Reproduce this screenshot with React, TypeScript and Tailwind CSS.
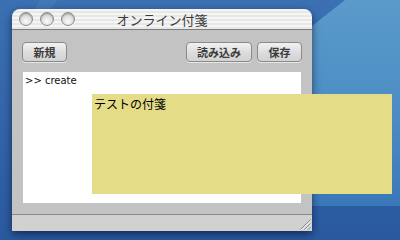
import React from 'react';

const jp = "font-['Lucida_Grande','Noto_Sans_CJK_JP',sans-serif]";

// Aqua desktop behind the window
const Wallpaper: React.FC = () => (
    <svg className="absolute inset-0" width="400" height="240" viewBox="0 0 400 240">
        <defs>
            <linearGradient id="base" x1="0" y1="0" x2="0" y2="1">
                <stop offset="0" stopColor="#3b71b3" />
                <stop offset="1" stopColor="#2a59a0" />
            </linearGradient>
            <linearGradient id="light" x1="0" y1="0" x2="0" y2="1">
                <stop offset="0" stopColor="#5a9bcb" />
                <stop offset="0.6" stopColor="#4a8bc3" />
                <stop offset="1" stopColor="#3a77b8" />
            </linearGradient>
        </defs>
        <rect width="400" height="240" fill="url(#base)" />
        <polygon points="345,0 400,0 400,206 312,206 312,26" fill="url(#light)" />
        <polygon points="40,0 58,0 30,30 22,30" fill="#4a82c0" opacity="0.5" />
    </svg>
);

const Light: React.FC = () => (
    <span className="block w-[14px] h-[14px] rounded-full border border-[#8e8e8e] bg-[radial-gradient(circle_at_50%_70%,#fbfbfb_0%,#e2e2e2_45%,#b9b9b9_100%)] shadow-[inset_0_1px_1px_rgba(0,0,0,0.25)]" />
);

const Button: React.FC<{ label: string; w: string }> = ({ label, w }) => (
    <button
        className={`${w} h-[20px] rounded-[4px] border border-[#8a8a8a] bg-[linear-gradient(to_bottom,#f2f2f2,#dcdcdc_55%,#d2d2d2)] shadow-[0_1px_0_rgba(255,255,255,0.6)] text-[11px] font-bold text-[#3c3c3c] leading-none ${jp}`}
    >
        {label}
    </button>
);

export default function App() {
    return (
        <div className="relative w-[400px] h-[240px] overflow-hidden pl-[12px] pt-[9px]">
            <Wallpaper />

            {/* Window */}
            <div className="relative w-[300px] h-[222px] flex flex-col rounded-t-[8px] shadow-[0_3px_9px_rgba(0,0,20,0.55)]">
                <div className="relative h-[21px] shrink-0 flex items-center pl-[7px] gap-[7px] rounded-t-[8px] border-b border-[#7d7d7d] bg-[repeating-linear-gradient(to_bottom,#f5f5f5_0px,#f5f5f5_2px,#e7e7e7_2px,#e7e7e7_4px)]">
                    <Light />
                    <Light />
                    <Light />
                    <span className={`absolute inset-x-0 top-[2px] text-center text-[13px] leading-[17px] text-[#3a3a3a] ${jp}`}>
                        オンライン付箋
                    </span>
                </div>

                <div className="flex-1 bg-[#c3c3c3] px-[10px] pt-[12px]">
                    <div className="flex gap-[5px]">
                        <Button label="新規" w="w-[45px]" />
                        <div className="flex-1" />
                        <Button label="読み込み" w="w-[66px]" />
                        <Button label="保存" w="w-[45px]" />
                    </div>
                    <div className="mx-[1px] mt-[10px] h-[131px] bg-white pl-[2px] pt-[2px]">
                        <p className="font-['DejaVu_Sans',sans-serif] text-[10px] leading-[13px] text-[#111]">&gt;&gt; create</p>
                    </div>
                </div>

                <div className="relative h-[17px] shrink-0 border-t border-[#8a8a8a] bg-[#d1d1d1]">
                    <svg className="absolute right-[1px] bottom-[1px]" width="12" height="12" viewBox="0 0 12 12">
                        <g strokeWidth="1">
                            <line x1="11.5" y1="1.5" x2="1.5" y2="11.5" stroke="#8a8a8a" />
                            <line x1="12" y1="2.5" x2="2.5" y2="12" stroke="#f4f4f4" />
                            <line x1="11.5" y1="5.5" x2="5.5" y2="11.5" stroke="#8a8a8a" />
                            <line x1="12" y1="6.5" x2="6.5" y2="12" stroke="#f4f4f4" />
                            <line x1="11.5" y1="9" x2="9" y2="11.5" stroke="#8a8a8a" />
                        </g>
                    </svg>
                </div>
            </div>

            {/* Sticky note, dragged partly outside the window */}
            <div className="absolute left-[92px] top-[94px] w-[300px] h-[100px] bg-[#e5dc87] pl-[2px] pt-[2px]">
                <p className={`text-[12px] leading-[16px] text-black ${jp}`}>テストの付箋</p>
            </div>
        </div>
    );
}
